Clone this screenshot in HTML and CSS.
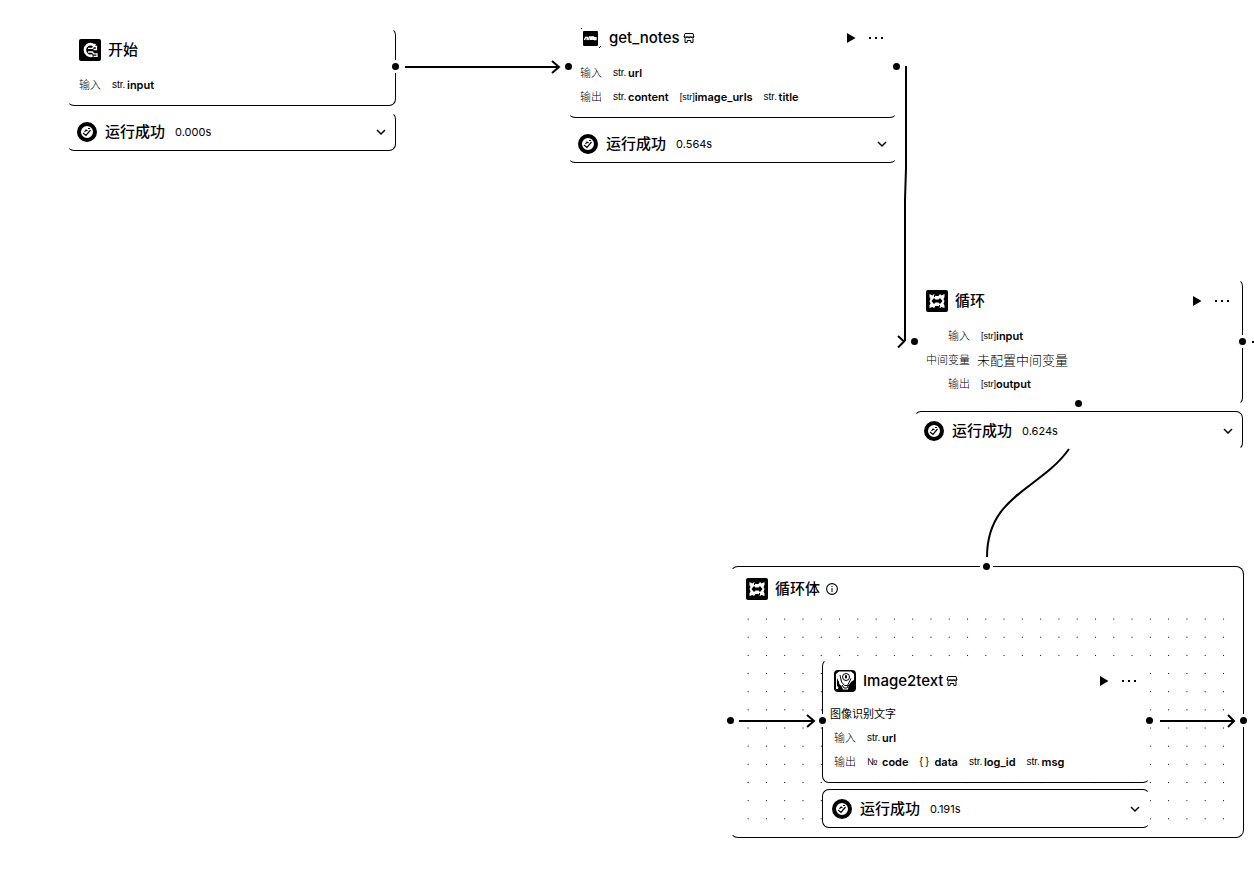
FILE: index.html
```html
<!DOCTYPE html>
<html lang="zh-CN">
<head>
<meta charset="utf-8">
<title>工作流</title>
<link rel="stylesheet" href="styles.css">
</head>
<body>
<svg class="sprite" aria-hidden="true">
  <symbol id="i-start" viewBox="0 0 22 22">
    <rect width="22" height="22" rx="2"/>
    <path d="M13.500 5.500A5.800 5.800 0 1 0 13.500 16.500" fill="none" stroke="#fff" stroke-width="2.600"/>
    <path d="M9 9.300h4.500l1-1.800h3v3h-3M9 13h4.500l1 1.800h3.500v2.500h-3.500" fill="none" stroke="#fff" stroke-width="1.300"/>
    <path d="M13 4.500l4 .5-1 2.500-3-.5z" fill="#fff"/>
  </symbol>
  <symbol id="i-notes" viewBox="0 0 22 22">
    <rect x="3" y="4" width="15" height="15" rx="1"/>
    <path d="M4.500 13l1-2.500h2l-.5 2.500M8.500 13l1-3h1.500l-.5 3M12 13v-3h1.500v3M14.500 10v2.500h1.500V10" fill="none" stroke="#fff" stroke-width="1.400"/>
    <path d="M1 1h1v1H1zM19 20h1v1h-1zM20 19h1v1h-1z"/>
  </symbol>
  <symbol id="i-loop" viewBox="0 0 22 22">
    <rect width="22" height="22" rx="2"/>
    <path d="M3.500 4l3 1.500 1.500-1.500 1.500 2h3L14 4l1.500 1.500L18.500 4v3l-1 2 1 2-1 2.500 1 2V18l-3-1-1.500 1-1.500-2h-3L8 18l-1.500-1-3 1v-2.500l1-2-1-2.500 1-2-1-2z" fill="#fff"/>
    <path d="M5.500 11l2.500-3 1.500 1.500h3L14 8l2.500 3-2.500 3-1.500-1.500h-3L8 14zM8 5h1v2H8zM13 15h1v2h-1z"/>
  </symbol>
  <symbol id="i-image" viewBox="0 0 22 22">
    <rect width="22" height="22" rx="4"/>
    <path d="M2 4l3-2.500h12L20 4v6l-2.500 1.500-3 4L14 19.500H9L7.500 16 5 14l-1 5H2z" fill="#fff"/>
    <circle cx="12" cy="7" r="3.500" fill="none" stroke="#000"/>
    <path d="M11.500 5.500h1v2.500h-1zM6 5l1.500 7 3 3.500h3l3.500-7M8 15l2 3h3l1.500-3" fill="none" stroke="#000"/>
    <path d="M3 8l2 4 1 6-3-2zM18 13l2 6h-3z"/>
  </symbol>
  <symbol id="i-store" viewBox="0 0 12 12">
    <path d="M2 1.500h8l1 3.500H1zM1 5q1.500 2 3.300 0Q6 7 7.700 5 9.500 7 11 5M2 6.500v4h2.200V8.500h3.600v2H10v-4" fill="none" stroke="#000"/>
  </symbol>
  <symbol id="i-info" viewBox="0 0 12 12">
    <circle cx="6" cy="6" r="5.400" fill="none" stroke="#000" stroke-width="1.100"/>
    <path d="M5.500 5h1v4h-1zM5.500 3h1v1h-1z"/>
  </symbol>
  <symbol id="i-play" viewBox="0 0 10 12"><path d="M1 1l8.500 5L1 11z"/></symbol>
  <symbol id="i-more" viewBox="0 0 14 4"><path d="M0 1h2v2H0zM6 1h2v2H6zM12 1h2v2h-2z"/></symbol>
  <symbol id="i-ok" viewBox="0 0 20 20">
    <circle cx="10" cy="10" r="8" fill="#fff" stroke="#000" stroke-width="4"/>
    <path d="M6 11l3 2.500L13.500 8M7.500 10l1.500-2 1.500 1M11 6.500h2" fill="none" stroke="#000" stroke-width="1.200"/>
  </symbol>
  <symbol id="i-down" viewBox="0 0 10 10"><path d="M1 3l4 4 4-4" fill="none" stroke="#000" stroke-width="1.500"/></symbol>
</svg>

<main class="canvas">
  <section class="node node-start">
    <div class="card edge-right edge-bottom">
      <header class="head"><svg class="logo"><use href="#i-start"/></svg><h2 class="title">开始</h2></header>
      <div class="rows">
        <div class="row"><span class="label">输入</span><span class="var"><span class="type">str.</span><b>input</b></span></div>
      </div>
      <span class="port port-right"></span>
    </div>
    <div class="status edge-right edge-bottom">
      <svg class="ok"><use href="#i-ok"/></svg><span class="state">运行成功</span><span class="time">0.000s</span>
      <button class="icon-btn push" aria-label="展开"><svg class="down"><use href="#i-down"/></svg></button>
    </div>
  </section>

  <section class="node node-notes">
    <div class="card edge-bottom">
      <header class="head"><svg class="logo"><use href="#i-notes"/></svg><h2 class="title">get_notes</h2><svg class="mini"><use href="#i-store"/></svg>
        <button class="icon-btn push" aria-label="运行"><svg class="play"><use href="#i-play"/></svg></button>
        <button class="icon-btn" aria-label="更多"><svg class="more"><use href="#i-more"/></svg></button>
      </header>
      <div class="rows">
        <div class="row"><span class="label">输入</span><span class="var"><span class="type">str.</span><b>url</b></span></div>
        <div class="row"><span class="label">输出</span><span class="var"><span class="type">str.</span><b>content</b></span><span class="var"><span class="type type-list">[str]</span><b>image_urls</b></span><span class="var"><span class="type">str.</span><b>title</b></span></div>
      </div>
      <span class="port port-left"></span><span class="port port-right"></span>
    </div>
    <div class="status edge-bottom">
      <svg class="ok"><use href="#i-ok"/></svg><span class="state">运行成功</span><span class="time">0.564s</span>
      <button class="icon-btn push" aria-label="展开"><svg class="down"><use href="#i-down"/></svg></button>
    </div>
  </section>

  <section class="node node-loop">
    <div class="card edge-right">
      <header class="head"><svg class="logo"><use href="#i-loop"/></svg><h2 class="title">循环</h2>
        <button class="icon-btn push" aria-label="运行"><svg class="play"><use href="#i-play"/></svg></button>
        <button class="icon-btn" aria-label="更多"><svg class="more"><use href="#i-more"/></svg></button>
      </header>
      <div class="rows rows-wide">
        <div class="row"><span class="label">输入</span><span class="var"><span class="type type-list">[str]</span><b>input</b></span></div>
        <div class="row"><span class="label">中间变量</span><span class="empty">未配置中间变量</span></div>
        <div class="row"><span class="label">输出</span><span class="var"><span class="type type-list">[str]</span><b>output</b></span></div>
      </div>
      <span class="port port-left"></span><span class="port port-right"></span><span class="port port-bottom"></span>
    </div>
    <div class="status edge-top edge-right">
      <svg class="ok"><use href="#i-ok"/></svg><span class="state">运行成功</span><span class="time">0.624s</span>
      <button class="icon-btn push" aria-label="展开"><svg class="down"><use href="#i-down"/></svg></button>
    </div>
  </section>

  <section class="node-body">
    <header class="head"><svg class="logo"><use href="#i-loop"/></svg><h2 class="title">循环体</h2><svg class="mini info"><use href="#i-info"/></svg></header>
    <div class="dots">
      <section class="node node-image">
        <div class="card edge-left edge-bottom">
          <header class="head"><svg class="logo"><use href="#i-image"/></svg><h2 class="title">Image2text</h2><svg class="mini"><use href="#i-store"/></svg>
            <button class="icon-btn push" aria-label="运行"><svg class="play"><use href="#i-play"/></svg></button>
            <button class="icon-btn" aria-label="更多"><svg class="more"><use href="#i-more"/></svg></button>
          </header>
          <div class="rows rows-tight">
            <p class="desc">图像识别文字</p>
            <div class="row"><span class="label">输入</span><span class="var"><span class="type">str.</span><b>url</b></span></div>
            <div class="row"><span class="label">输出</span><span class="var"><span class="type">№</span><b>code</b></span><span class="var"><span class="type">{ }</span><b>data</b></span><span class="var"><span class="type">str.</span><b>log_id</b></span><span class="var"><span class="type">str.</span><b>msg</b></span></div>
          </div>
          <span class="port port-left"></span><span class="port port-right"></span>
        </div>
        <div class="status edge-top edge-left edge-bottom">
          <svg class="ok"><use href="#i-ok"/></svg><span class="state">运行成功</span><span class="time">0.191s</span>
          <button class="icon-btn push" aria-label="展开"><svg class="down"><use href="#i-down"/></svg></button>
        </div>
      </section>
    </div>
    <span class="port port-left"></span><span class="port port-right"></span><span class="port port-top"></span>
  </section>

  <svg class="edges" aria-hidden="true">
    <path d="M405 67H559M552 61l7 6-7 6"/>
    <path d="M906 66V168L905 200V341M898 336l6 5.500-6 6"/>
    <path d="M1252 342h12"/>
    <path d="M1069 449C1040 490 987 495 987 557"/>
    <path d="M739 721h75M807 715l7 6-7 6"/>
    <path d="M1160 721h74M1228 715l6 6-6 6"/>
  </svg>
</main>
</body>
</html>
```
FILE: styles.css
```css
* { box-sizing: border-box; }
body {
  margin: 0;
  background: #fff;
  color: #000;
  font-family: Inter, "Noto Sans CJK SC", sans-serif;
  font-size: 11px;
  line-height: 16px;
}
.sprite { position: absolute; width: 0; height: 0; }
.canvas { position: relative; min-height: 100vh; overflow: hidden; }
.edges {
  position: absolute; inset: 0; width: 100%; height: 100%;
  fill: none; stroke: #000; stroke-width: 2; pointer-events: none;
}

.node { display: flex; flex-direction: column; gap: 6px; width: 329px; }
.node-start, .node-notes, .node-loop, .node-body { position: absolute; }
.node-start { left: 67px; top: 28px; }
.node-notes { left: 568px; top: 16px; }
.node-loop { left: 914px; top: 279px; }
.node-body { left: 730px; top: 566px; }
.node-image { width: 328px; }

.card, .status {
  position: relative;
  background: #fff;
  border: 1px solid transparent;
  border-radius: 7px;
}
.card { padding: 10px 11px 12px; }
.status {
  display: flex; align-items: center;
  height: 39px; padding: 0 9px;
}
.edge-top { border-top-color: #000; }
.edge-right { border-right-color: #000; }
.edge-bottom { border-bottom-color: #000; }
.edge-left { border-left-color: #000; }

.head { display: flex; align-items: center; height: 22px; }
.logo { width: 22px; height: 22px; margin-right: 7px; }
.title { margin: 0; font-size: 15px; font-weight: 500; line-height: 22px; }
.mini { width: 12px; height: 12px; margin-left: 3px; }
.info { margin-left: 6px; }
.icon-btn {
  display: flex; padding: 0; border: 0; background: none; cursor: pointer;
}
.icon-btn + .icon-btn { margin: 0 2px 0 13px; }
.push { margin-left: auto; }
.play { width: 10px; height: 12px; }
.more { width: 14px; height: 4px; }
.down { width: 10px; height: 10px; }

.rows { display: flex; flex-direction: column; gap: 8px; margin-top: 16px; }
.rows-tight { margin-top: 14px; }
.row { display: flex; gap: 11px; height: 16px; }
.label { min-width: 22px; font-weight: 300; text-align: right; }
.rows-wide .label { width: 44px; }
.var { display: flex; gap: 1px; }
.var b { font-weight: 600; }
.type {
  width: 14px; white-space: nowrap;
  font-family: "Liberation Sans", sans-serif; font-size: 10px;
}
.type-list { font-size: 9px; }
.empty { margin-left: -4px; font-size: 13px; font-weight: 300; }
.desc { margin: 0 0 0 -4px; }

.ok { width: 20px; height: 20px; margin-right: 8px; }
.state { font-size: 15px; font-weight: 500; }
.time { margin-left: 10px; }
.status .push { margin-right: 0; }

.node-body {
  border: 1px solid #000; border-left-color: transparent;
  border-radius: 8px;
  padding: 11px 10px 9px 8px;
}
.node-body > .head { margin-left: 7px; }
.dots {
  margin-top: 10px;
  padding: 49px 83px 0;
  background-image: radial-gradient(circle, #000, transparent 1px);
  background-size: 18px 18px;
  background-repeat: round;
}

.port {
  position: absolute; z-index: 1;
  width: 7px; height: 7px; border-radius: 50%;
  background: #000; box-shadow: 0 0 0 3px #fff;
}
.port-left { left: -4px; top: calc(50% - 4px); }
.port-right { right: -4px; top: calc(50% - 4px); }
.port-bottom { bottom: -3px; left: calc(50% - 4px); }
.port-top { top: -4px; left: calc(50% - 4px); }
.node-body > .port-left, .node-body > .port-right { top: 150px; }
```
